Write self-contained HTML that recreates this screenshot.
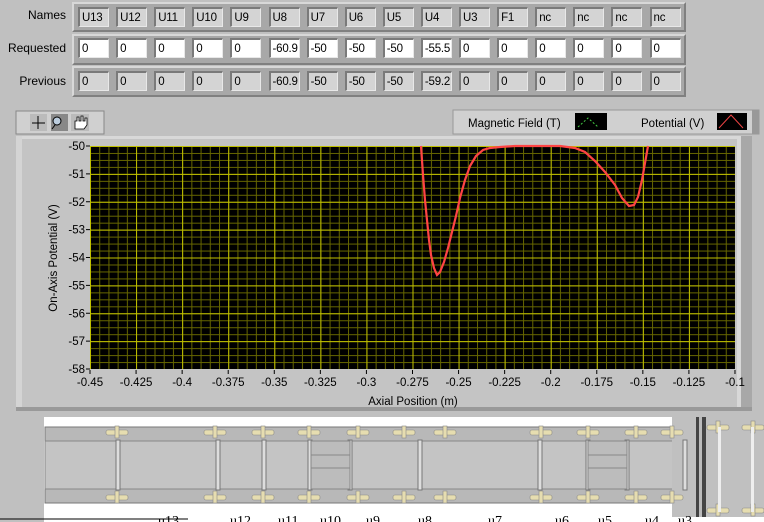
<!DOCTYPE html>
<html><head><meta charset="utf-8"><style>
body{margin:0;width:764px;height:522px;overflow:hidden;background:#c0c0c0;font-family:"Liberation Sans",sans-serif;font-size:12px;position:relative}
.lbl{position:absolute;width:66px;text-align:right;color:#000}
.row{position:absolute;left:72px;width:614px;background:#a8a8a8;border-top:2px solid #d8d8d8;border-left:2px solid #d8d8d8;border-bottom:2px solid #808080;border-right:2px solid #808080;box-sizing:border-box}
.c{position:absolute;height:20px;width:31px;box-sizing:border-box;border-top:2px solid #7a7a7a;border-left:2px solid #7a7a7a;border-bottom:1px solid #e8e8e8;border-right:1px solid #e8e8e8;padding-left:2px;line-height:18px;font-size:11.5px;letter-spacing:-0.2px}
.n{background:#d4d4d4}.w{background:#fff}.p{background:#d4d4d4}
</style></head><body>
<div class="lbl" style="left:0;top:8px">Names</div>
<div class="lbl" style="left:0;top:41px">Requested</div>
<div class="lbl" style="left:0;top:74px">Previous</div>
<div class="row" style="top:2px;height:30px"></div>
<div class="row" style="top:34px;height:31px"></div>
<div class="row" style="top:66px;height:31px"></div>
<div id="cells"></div>
<script>
var names=["U13","U12","U11","U10","U9","U8","U7","U6","U5","U4","U3","F1","nc","nc","nc","nc"];
var req=["0","0","0","0","0","-60.9","-50","-50","-50","-55.5","0","0","0","0","0","0"];
var prev=["0","0","0","0","0","-60.9","-50","-50","-50","-59.2","0","0","0","0","0","0"];
var h="";
for(var i=0;i<16;i++){var x=78+i*38.1;
h+='<div class="c n" style="left:'+x+'px;top:7px">'+names[i]+'</div>';
h+='<div class="c w" style="left:'+x+'px;top:38px">'+req[i]+'</div>';
h+='<div class="c p" style="left:'+x+'px;top:71px">'+prev[i]+'</div>';}
document.getElementById("cells").innerHTML=h;
</script>
<svg width="764" height="522" style="position:absolute;left:0;top:0" xmlns="http://www.w3.org/2000/svg">
<defs>
<pattern id="gx" x="90" y="0" width="9.214" height="10" patternUnits="userSpaceOnUse"><line x1="0.5" y1="0" x2="0.5" y2="10" stroke="#666600" stroke-width="1"/></pattern>
<pattern id="gy" x="0" y="146" width="10" height="6.97" patternUnits="userSpaceOnUse"><line x1="0" y1="0.5" x2="10" y2="0.5" stroke="#666600" stroke-width="1"/></pattern>
<pattern id="Gx" x="90" y="0" width="46.07" height="10" patternUnits="userSpaceOnUse"><line x1="0.5" y1="0" x2="0.5" y2="10" stroke="#c0c000" stroke-width="1"/></pattern>
<pattern id="Gy" x="0" y="146" width="10" height="27.875" patternUnits="userSpaceOnUse"><line x1="0" y1="0.5" x2="10" y2="0.5" stroke="#c0c000" stroke-width="1"/></pattern>
</defs>
<rect x="16" y="111" width="88" height="23" fill="#d0d0d0" stroke="#888"/>
<rect x="30" y="114" width="17" height="17" fill="#bbb"/><rect x="51" y="114" width="17" height="17" fill="#888"/><rect x="71" y="114" width="18" height="17" fill="#bbb"/>
<path d="M32 123h13M38 116v13" stroke="#000"/><circle cx="57" cy="121" r="4" fill="#bcd" stroke="#000"/><path d="M55 125l-3 4" stroke="#000"/>
<path d="M75 129v-8h2v-4h2v4h2v-5h2v5h2v-3h2v7l-3 4z" fill="#fff" stroke="#000" stroke-width="0.8"/>
<rect x="453" y="110" width="306" height="24" fill="#d0d0d0" stroke="#999"/>
<rect x="752" y="110" width="7" height="24" fill="#999"/>
<text x="468" y="127" font-size="11.5" font-family="Liberation Sans">Magnetic Field (T)</text>
<rect x="575" y="113" width="32" height="17" fill="#000"/><path d="M578 127l10-9 10 9" fill="none" stroke="#4c4" stroke-dasharray="2 2"/>
<text x="641" y="127" font-size="11.5" font-family="Liberation Sans">Potential (V)</text>
<rect x="717" y="113" width="30" height="17" fill="#000"/><path d="M719 128l12-13 12 13" fill="none" stroke="#e44"/>
<rect x="16" y="136" width="736" height="275" fill="#c4c4c4"/>
<rect x="16" y="136" width="736" height="3" fill="#d8d8d8"/>
<rect x="16" y="136" width="6" height="275" fill="#d4d4d4"/>
<rect x="737" y="136" width="15" height="275" fill="#a8a8a8"/>
<rect x="737" y="136" width="4" height="275" fill="#d8d8d8"/>
<rect x="16" y="407" width="736" height="4" fill="#999"/>
<rect x="90" y="146" width="645" height="223" fill="#000"/>
<rect x="90" y="146" width="645" height="223" fill="url(#gx)"/>
<rect x="90" y="146" width="645" height="223" fill="url(#gy)"/>
<rect x="90" y="146" width="645" height="223" fill="url(#Gx)"/>
<rect x="90" y="146" width="645" height="223" fill="url(#Gy)"/>
<g font-size="11.5" font-family="Liberation Sans" text-anchor="end" id="yl"></g>
<g font-size="11.5" font-family="Liberation Sans" text-anchor="middle" id="xl"></g>
<text x="413" y="405" font-size="11.5" font-family="Liberation Sans" text-anchor="middle">Axial Position (m)</text>
<text transform="translate(57,258) rotate(-90)" font-size="11.5" font-family="Liberation Sans" text-anchor="middle">On-Axis Potential (V)</text>
<polyline fill="none" stroke="#ff4444" stroke-width="2.2" points="421,146 423,175 425,200 427,220 429,240 431,255 434,268 437,275 440,272 444,262 448,248 452,232 456,216 460,198 465,180 470,166 476,156 483,150 490,148 500,147 515,146 560,146 575,148 585,152 595,161 605,172 615,185 622,198 629,206 634,205 638,197 642,180 645,163 648,146"/>
<rect x="44" y="417" width="628" height="94" fill="#fff"/>
<rect x="44" y="511" width="720" height="11" fill="#fff"/>
<rect x="45" y="427" width="655" height="76" fill="#b8b8b8" stroke="#777"/>
<rect x="45" y="441" width="655" height="48" fill="#c4c4c4" stroke="#888"/>
<rect x="672" y="417" width="92" height="100" fill="#c0c0c0"/>
<rect x="696" y="417" width="10" height="100" fill="#444"/>
<rect x="699" y="417" width="3" height="100" fill="#bbb"/>
<g id="dg"></g>
<g font-size="14" font-family="Liberation Serif">
<text x="158" y="525">u13</text><text x="230" y="525">u12</text><text x="278" y="525">u11</text><text x="320" y="525">u10</text><text x="366" y="525">u9</text><text x="418" y="525">u8</text><text x="488" y="525">u7</text><text x="555" y="525">u6</text><text x="598" y="525">u5</text><text x="645" y="525">u4</text><text x="678" y="525">u3</text>
</g>
<line x1="0" y1="519" x2="188" y2="519" stroke="#000"/>
</svg>
<script>
var s="";
for(var i=0;i<=8;i++){var y=146+i*27.875;s+='<text x="85" y="'+(y+4)+'">-'+(50+i)+'</text><line x1="86" y1="'+y+'" x2="90" y2="'+y+'" stroke="#000"/>';}
document.getElementById("yl").innerHTML=s;
var xs=["-0.45","-0.425","-0.4","-0.375","-0.35","-0.325","-0.3","-0.275","-0.25","-0.225","-0.2","-0.175","-0.15","-0.125","-0.1"];s="";
for(var i=0;i<15;i++){var x=90+i*46.07;s+='<line x1="'+x+'" y1="370" x2="'+x+'" y2="374" stroke="#000"/><text x="'+x+'" y="386">'+xs[i]+'</text>';}
document.getElementById("xl").innerHTML=s;
var cx=[117,215,263,309,358,404,445,541,588,636,672,718,753];s="";
var posts=[118,218,264,310,350,420,540,588,627,685];
for(var i=0;i<posts.length;i++)s+='<rect x="'+(posts[i]-2)+'" y="440" width="4" height="50" fill="#ddd" stroke="#777"/>';
s+='<rect x="311" y="441" width="39" height="48" fill="#bcbcbc" stroke="#888"/><line x1="311" y1="455" x2="350" y2="455" stroke="#888"/><line x1="311" y1="468" x2="350" y2="468" stroke="#888"/>';
s+='<rect x="588" y="441" width="39" height="48" fill="#bcbcbc" stroke="#888"/><line x1="588" y1="455" x2="627" y2="455" stroke="#888"/><line x1="588" y1="468" x2="627" y2="468" stroke="#888"/>';
for(var i=0;i<cx.length;i++){var ys=i>=11?[427,510]:[432,497];for(var j=0;j<2;j++){var y=ys[j];s+='<rect x="'+(cx[i]-11)+'" y="'+(y-2)+'" width="22" height="5" rx="2" fill="#e6ddb0" stroke="#888" stroke-width="0.6"/><rect x="'+(cx[i]-2)+'" y="'+(y-6)+'" width="4" height="12" fill="#e6ddb0" stroke="#888" stroke-width="0.6"/>';}}
s+='<rect x="718" y="427" width="3" height="85" fill="#eee"/><rect x="751" y="427" width="3" height="85" fill="#eee"/>';
document.getElementById("dg").innerHTML=s;
</script>
</body></html>
